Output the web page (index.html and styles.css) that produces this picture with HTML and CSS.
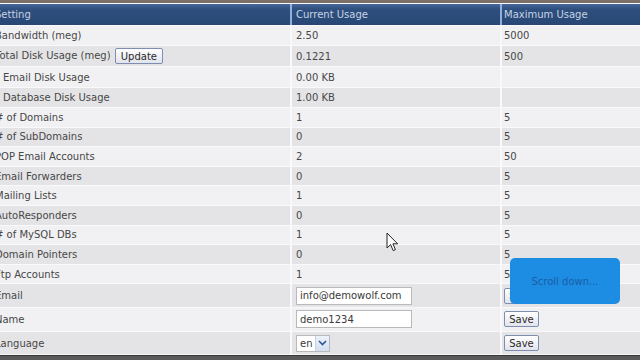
FILE: index.html
```html
<!DOCTYPE html>
<html>
<head>
<meta charset="utf-8">
<link rel="stylesheet" href="styles.css">
</head>
<body>
<div class="topbar"></div>
<table class="usage">
  <colgroup><col class="c1"><col class="c2"><col class="c3"></colgroup>
  <thead>
    <tr class="head"><th>Setting</th><th>Current Usage</th><th>Maximum Usage</th></tr>
  </thead>
  <tbody>
    <tr class="lt h19"><td>Bandwidth (meg)</td><td>2.50</td><td>5000</td></tr>
    <tr class="dk h20"><td>Total Disk Usage (meg) <button class="btn upd">Update</button></td><td>0.1221</td><td>500</td></tr>
    <tr class="lt h20"><td class="sub">Email Disk Usage</td><td>0.00 KB</td><td></td></tr>
    <tr class="dk h19"><td class="sub">Database Disk Usage</td><td>1.00 KB</td><td></td></tr>
    <tr class="lt h18"><td># of Domains</td><td>1</td><td>5</td></tr>
    <tr class="dk h18"><td># of SubDomains</td><td>0</td><td>5</td></tr>
    <tr class="lt h18"><td>POP Email Accounts</td><td>2</td><td>50</td></tr>
    <tr class="dk h18"><td>Email Forwarders</td><td>0</td><td>5</td></tr>
    <tr class="lt h18"><td>Mailing Lists</td><td>1</td><td>5</td></tr>
    <tr class="dk h18"><td>AutoResponders</td><td>0</td><td>5</td></tr>
    <tr class="lt h18"><td># of MySQL DBs</td><td>1</td><td>5</td></tr>
    <tr class="dk h18"><td>Domain Pointers</td><td>0</td><td>5</td></tr>
    <tr class="lt h18"><td>Ftp Accounts</td><td>1</td><td>5</td></tr>
    <tr class="dk h22"><td>Email</td><td><input class="field" type="text" value="info@demowolf.com"></td><td><button class="btn save">Save</button></td></tr>
    <tr class="lt h23"><td>Name</td><td><input class="field" type="text" value="demo1234"></td><td><button class="btn save">Save</button></td></tr>
    <tr class="dk h22"><td>Language</td><td><span class="sel"><span class="sel-val">en</span><span class="sel-arrow"><svg width="9" height="6" viewBox="0 0 9 6"><path d="M1 1 L4.5 4.5 L8 1" fill="none" stroke="#2f5597" stroke-width="1.6"/></svg></span></span></td><td><button class="btn save">Save</button></td></tr>
  </tbody>
</table>
<div class="bottombar"></div>
<div class="toast">Scroll down...</div>
<svg class="cursor" width="13" height="20" viewBox="0 0 13 20"><path d="M1 1 L1 16 L4.6 12.6 L7.2 18.6 L9.4 17.6 L6.9 11.8 L11.6 11.8 Z" fill="#ffffff" stroke="#222" stroke-width="1" stroke-linejoin="round"/></svg>
</body>
</html>
```
FILE: styles.css
```css
html, body {
  margin: 0;
  padding: 0;
  width: 640px;
  height: 360px;
  overflow: hidden;
  background: #f8f8fa;
  font-family: "DejaVu Sans", Verdana, sans-serif;
  font-size: 10px;
  color: #474747;
  position: relative;
}
.topbar {
  height: 3px;
  background: #7c7068;
}
.usage {
  margin-left: -10px;
  border-collapse: separate;
  border-spacing: 2px 1px;
  table-layout: fixed;
  width: 664px;
  background: #f9f9fb;
}
.c1 { width: 298px; }
.c2 { width: 208px; }
.c3 { width: 150px; }
.usage th, .usage td {
  padding: 0 0 0 3px;
  text-align: left;
  vertical-align: middle;
  white-space: nowrap;
  font-weight: normal;
}
.usage td:nth-child(2) { padding-left: 4px; }
.usage td:nth-child(3) { padding-left: 2px; }
.head th {
  height: 21px;
  color: #c7d3e4;
  background: linear-gradient(#47689a 0%, #2f4f7e 25%, #27467452 100%), #284775;
}
.head th:nth-child(2) { padding-left: 4px; }
.head th:nth-child(3) { padding-left: 2px; }
.head th + th { box-shadow: -2px 0 0 #8eb0da; }
.lt td { background: #f1f1f3; }
.dk td { background: #e4e4e6; }
.h19 { height: 19px; }
.h20 { height: 20px; }
.h18 { height: 18.6px; }
.h22 { height: 22.5px; }
.h23 { height: 23px; }
.usage td.sub { padding-left: 11px; }
.btn {
  font-family: "DejaVu Sans", Verdana, sans-serif;
  font-size: 10px;
  color: #2a2a2a;
  height: 16px;
  padding: 0 5px;
  border: 1px solid #7f8db0;
  border-radius: 2px;
  background: linear-gradient(#ffffff, #e2e4ec);
  vertical-align: middle;
  line-height: 13px;
}
.upd { margin-left: 1px; width: 48px; }
.save { width: 35px; padding: 0 2px; }
.field {
  box-sizing: border-box;
  width: 116px;
  height: 18px;
  border: 1px solid #b9b9b9;
  background: #ffffff;
  font-family: "DejaVu Sans", Verdana, sans-serif;
  font-size: 10px;
  color: #3a3a3a;
  padding: 0 3px;
  margin: 0;
  vertical-align: middle;
  outline: none;
}
.sel {
  display: inline-flex;
  align-items: stretch;
  box-sizing: border-box;
  width: 34px;
  height: 17px;
  border: 1px solid #b9b9b9;
  background: #ffffff;
  vertical-align: middle;
}
.sel-val {
  flex: 1;
  padding-left: 3px;
  line-height: 15px;
  color: #3a3a3a;
}
.sel-arrow {
  width: 13px;
  display: flex;
  align-items: center;
  justify-content: center;
  background: linear-gradient(#eef3fb, #d3dff0);
  border-left: 1px solid #c4cfe0;
}
.bottombar {
  height: 6px;
  background: #5b5b5b;
  border-top: 1px solid #383838;
}
.toast {
  position: absolute;
  left: 510px;
  top: 258px;
  width: 110px;
  height: 46px;
  border-radius: 5px;
  background: #1c8de3;
  color: #1b5ea6;
  font-size: 10px;
  display: flex;
  align-items: center;
  justify-content: center;
}
.cursor {
  position: absolute;
  left: 386px;
  top: 232px;
}
```
